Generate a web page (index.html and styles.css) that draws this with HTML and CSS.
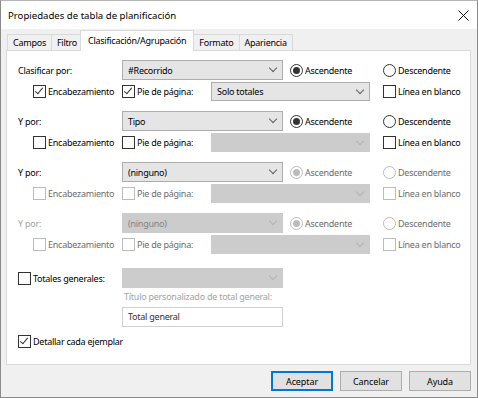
FILE: index.html
```html
<!DOCTYPE html>
<html lang="es">
<head>
  <meta charset="UTF-8" />
  <title>Propiedades de tabla de planificación</title>
  <link rel="stylesheet" href="styles.css">
</head>
<body>
  <div class="window">

    <!-- Title bar -->
    <div class="titlebar">
      <span class="title">Propiedades de tabla de planificación</span>
      <svg class="close" width="11" height="11" viewBox="0 0 11 11">
        <path d="M0.5 0.5 L10.5 10.5 M10.5 0.5 L0.5 10.5" stroke="#111" stroke-width="1" fill="none" />
      </svg>
    </div>

    <div class="dialog-body">
      <!-- Tabs -->
      <div class="tabs">
        <div class="tab">Campos</div>
        <div class="tab">Filtro</div>
        <div class="tab active">Clasificación/Agrupación</div>
        <div class="tab">Formato</div>
        <div class="tab">Apariencia</div>
      </div>

      <div class="panel">

        <!-- Group 1 -->
        <div class="sort-group">
          <div class="lbl">Clasificar por:</div>
          <div class="select wide"><span>#Recorrido</span><i class="chev"></i></div>
          <label class="radio asc"><span class="circle on"></span>Ascendente</label>
          <label class="radio"><span class="circle"></span>Descendente</label>

          <label class="check indent"><span class="box on"></span>Encabezamiento</label>
          <label class="check"><span class="box on"></span>Pie de página:</label>
          <div class="select foot"><span>Solo totales</span><i class="chev"></i></div>
          <label class="check"><span class="box"></span>Línea en blanco</label>
        </div>

        <!-- Group 2 -->
        <div class="sort-group">
          <div class="lbl">Y por:</div>
          <div class="select wide"><span>Tipo</span><i class="chev"></i></div>
          <label class="radio asc"><span class="circle on"></span>Ascendente</label>
          <label class="radio"><span class="circle"></span>Descendente</label>

          <label class="check indent"><span class="box"></span>Encabezamiento</label>
          <label class="check"><span class="box"></span>Pie de página:</label>
          <div class="select foot disabled"><span></span><i class="chev"></i></div>
          <label class="check"><span class="box"></span>Línea en blanco</label>
        </div>

        <!-- Group 3 -->
        <div class="sort-group">
          <div class="lbl">Y por:</div>
          <div class="select wide"><span>(ninguno)</span><i class="chev"></i></div>
          <label class="radio asc dis"><span class="circle on"></span>Ascendente</label>
          <label class="radio dis"><span class="circle"></span>Descendente</label>

          <label class="check indent dis"><span class="box"></span>Encabezamiento</label>
          <label class="check dis"><span class="box"></span>Pie de página:</label>
          <div class="select foot disabled"><span></span><i class="chev"></i></div>
          <label class="check dis"><span class="box"></span>Línea en blanco</label>
        </div>

        <!-- Group 4 -->
        <div class="sort-group">
          <div class="lbl light">Y por:</div>
          <div class="select wide disabled"><span>(ninguno)</span><i class="chev"></i></div>
          <label class="radio asc dis"><span class="circle on"></span>Ascendente</label>
          <label class="radio dis"><span class="circle"></span>Descendente</label>

          <label class="check indent dis"><span class="box"></span>Encabezamiento</label>
          <label class="check dis"><span class="box"></span>Pie de página:</label>
          <div class="select foot disabled"><span></span><i class="chev"></i></div>
          <label class="check dis"><span class="box"></span>Línea en blanco</label>
        </div>

        <!-- Grand totals -->
        <div class="totals">
          <div class="totals-row">
            <label class="check totals-check"><span class="box"></span>Totales generales:</label>
            <div class="select totals-select disabled"><span></span><i class="chev"></i></div>
          </div>
          <div class="hint">Título personalizado de total general:</div>
          <div class="textbox">Total general</div>
        </div>

        <label class="check detail"><span class="box on"></span>Detallar cada ejemplar</label>
      </div>

      <div class="buttons">
        <button class="btn default">Aceptar</button>
        <button class="btn">Cancelar</button>
        <button class="btn">Ayuda</button>
      </div>
    </div>
  </div>
</body>
</html>
```

FILE: styles.css
```css
    body {
      margin: 0;
      font-family: 'Noto Sans', 'Open Sans', sans-serif;
      font-size: 9px;
      letter-spacing: -0.25px;
      color: #000;
      background: #fff;
    }

    .window {
      width: 478px;
      height: 398px;
      box-sizing: border-box;
      border: 1px solid #8a8a8a;
      border-top-color: #b5b5b5;
      background: #f0f0f0;
      display: flex;
      flex-direction: column;
    }

    .titlebar {
      height: 28px;
      background: #fff;
      display: flex;
      align-items: center;
      justify-content: space-between;
      padding: 0 8px 0 7px;
      flex-shrink: 0;
    }

    .title {
      font-size: 9.6px;
      letter-spacing: 0;
    }

    .dialog-body {
      padding: 2px 6px 0 5px;
      flex: 1;
      display: flex;
      flex-direction: column;
    }

    /* Tabs */
    .tabs {
      display: flex;
      align-items: flex-end;
      height: 19px;
      padding-left: 1px;
      position: relative;
      z-index: 1;
    }

    .tab {
      height: 15px;
      line-height: 15px;
      padding: 0 5px;
      border: 1px solid #d9d9d9;
      border-bottom: none;
      margin-right: -1px;
      background: #f0f0f0;
    }

    .tab.active {
      height: 20px;
      line-height: 19px;
      padding: 0 7px;
      margin: 0 -1px -1px -2px;
      background: #fff;
      position: relative;
    }

    .panel {
      height: 315px;
      box-sizing: border-box;
      background: #fff;
      border: 1px solid #d9d9d9;
      padding: 9px 0 0 11px;
    }

    /* Sort groups */
    .sort-group {
      display: grid;
      grid-template-columns: 104px 89px 72px 100px auto;
      grid-template-rows: 20px 19px;
      row-gap: 2px;
      align-items: center;
      margin-bottom: 10px;
    }

    .lbl.light {
      color: #a3a3a3;
    }

    .select {
      height: 20px;
      box-sizing: border-box;
      background: #e5e5e5;
      border: 1px solid #adadad;
      display: flex;
      align-items: center;
      justify-content: space-between;
      padding: 0 6px 0 5px;
    }

    .select.wide {
      grid-column: 2 / 4;
    }

    .select.foot {
      grid-column: 3 / 5;
      margin-right: 13px;
      height: 19px;
    }

    .select.disabled {
      background: #cccccc;
      border-color: #cccccc;
      color: #838383;
    }

    .chev {
      width: 5px;
      height: 5px;
      border-right: 1px solid #606060;
      border-bottom: 1px solid #606060;
      transform: translateY(-2px) rotate(45deg);
    }

    .select.disabled .chev {
      border-color: #b3b3b3;
    }

    .radio,
    .check {
      display: flex;
      align-items: center;
      white-space: nowrap;
    }

    .radio.asc {
      padding-left: 7px;
    }

    .check.indent {
      padding-left: 15px;
    }

    .circle {
      width: 13px;
      height: 13px;
      box-sizing: border-box;
      border: 1px solid #333;
      border-radius: 50%;
      margin-right: 2px;
      display: flex;
      align-items: center;
      justify-content: center;
    }

    .circle.on::after {
      content: "";
      width: 7px;
      height: 7px;
      border-radius: 50%;
      background: #333;
    }

    .box {
      width: 13px;
      height: 13px;
      box-sizing: border-box;
      border: 1px solid #333;
      margin-right: 2px;
      position: relative;
      background: #fff;
    }

    .box.on::after {
      content: "";
      position: absolute;
      left: 3px;
      top: 0px;
      width: 3px;
      height: 7px;
      border-right: 1px solid #333;
      border-bottom: 1px solid #333;
      transform: rotate(40deg);
    }

    .dis {
      color: #6d6d6d;
    }

    .dis .box,
    .dis .circle {
      border-color: #bcbcbc;
    }

    .dis .circle.on::after {
      background: #bcbcbc;
    }

    /* Grand totals */
    .totals {
      display: flex;
      flex-direction: column;
      margin-top: 14px;
    }

    .totals-row {
      display: flex;
      align-items: center;
      height: 20px;
    }

    .totals-check {
      width: 104px;
    }

    .totals-select {
      width: 161px;
    }

    .hint {
      color: #a3a3a3;
      height: 19px;
      line-height: 18px;
      padding-left: 106px;
    }

    .textbox {
      width: 161px;
      height: 20px;
      box-sizing: border-box;
      margin-left: 104px;
      border: 1px solid #d0d0d0;
      padding: 0 5px;
      line-height: 18px;
      color: #333;
    }

    .check.detail {
      margin-top: 8px;
    }

    /* Buttons */
    .buttons {
      display: flex;
      justify-content: flex-end;
      gap: 7px;
      padding-top: 6px;
    }

    .btn {
      width: 62px;
      height: 20px;
      font-family: inherit;
      font-size: 9px;
      letter-spacing: -0.1px;
      background: #e1e1e1;
      border: 1px solid #adadad;
      padding: 0;
      color: #000;
    }

    .btn.default {
      border: 1px solid #0078d7;
      box-shadow: inset 0 0 0 1px #0078d7;
    }
```
